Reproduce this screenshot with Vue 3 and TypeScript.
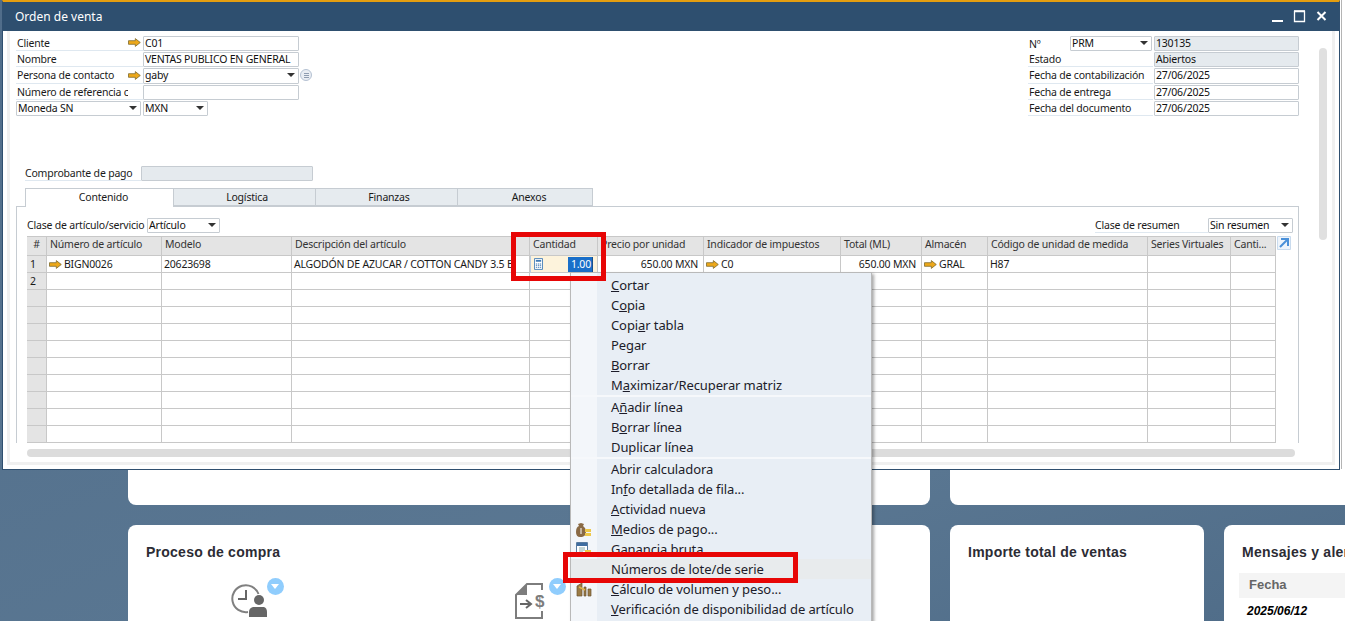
<script setup lang="ts">
interface Mi { t: string; u?: number; icon?: string; hl?: boolean; sep?: boolean }
const menu: Mi[] = [
  { t: 'Cortar', u: 0 }, { t: 'Copia', u: 1 }, { t: 'Copiar tabla', u: 4 }, { t: 'Pegar', u: 2 }, { t: 'Borrar', u: 0 },
  { t: 'Maximizar/Recuperar matriz', u: 1, sep: true },
  { t: 'Añadir línea', u: 1 }, { t: 'Borrar línea', u: 1 }, { t: 'Duplicar línea', sep: true },
  { t: 'Abrir calculadora' }, { t: 'Info detallada de fila...', u: 2 }, { t: 'Actividad nueva', u: 0 },
  { t: 'Medios de pago...', u: 0, icon: 'money' }, { t: 'Ganancia bruta', u: 0, icon: 'calc' },
  { t: 'Números de lote/de serie', hl: true }, { t: 'Cálculo de volumen y peso...', u: 0, icon: 'scale' },
  { t: 'Verificación de disponibilidad de artículo', u: 0 }
]
const head = ['#', 'Número de artículo', 'Modelo', 'Descripción del artículo', 'Cantidad', 'Precio por unidad', 'Indicador de impuestos', 'Total (ML)', 'Almacén', 'Código de unidad de medida', 'Series Virtuales', 'Canti...']
const blanks = Array.from({ length: 10 }, (_, i) => i)
const cols = Array.from({ length: 11 }, (_, i) => i)
</script>

<template>
  <div class="desk">
    <div class="cards">
      <div class="card wide"></div>
      <div class="card wide2"></div>
      <div class="card buy">
        <h3>Proceso de compra</h3>
        <div class="buyicons">
          <div class="bi">
            <svg width="36" height="36" viewBox="0 0 36 36"><path d="M27.500 10A13.500 13.500 0 1 0 17 28" fill="none" stroke="#808080" stroke-width="2"/><path d="M15 6v9H7" fill="none" stroke="#666" stroke-width="2"/><circle cx="28" cy="16" r="5" fill="#666"/><path d="M18 33v-5q0-4 4-5h11q3 1 3 5v5z" fill="#666"/></svg>
            <span class="drop"></span>
          </div>
          <div class="bi">
            <svg width="34" height="38" viewBox="0 0 34 38"><path d="M28 8V2H13L2 13v23h26v-7" fill="none" stroke="#7d7d7d" stroke-width="2"/><path d="M13 2v11H2z" fill="#7d7d7d"/><path d="M6 22h10M12 18l5 4-5 4" fill="none" stroke="#666" stroke-width="2"/><text x="21" y="25" class="dollar">$</text></svg>
            <span class="drop"></span>
          </div>
        </div>
      </div>
      <div class="card sales"><h3>Importe total de ventas</h3></div>
      <div class="card msg">
        <h3>Mensajes y alertas</h3>
        <div class="mh">Fecha</div>
        <div class="md">2025/06/12</div>
      </div>
    </div>

    <div class="edge"></div>
    <section class="win">
      <header class="title">
        <span>Orden de venta</span>
        <div class="ctrls">
          <svg width="14" height="14" viewBox="0 0 14 14"><path d="M1 12h11" stroke="#fff" stroke-width="2"/></svg>
          <svg width="14" height="14" viewBox="0 0 14 14"><path d="M1.500 2.500h10v10h-10z" fill="none" stroke="#fff" stroke-width="1.300"/><path d="M1 2h11" stroke="#fff" stroke-width="1.600"/></svg>
          <svg width="14" height="14" viewBox="0 0 14 14"><path d="M2.500 3l8 8M10.500 3l-8 8" stroke="#fff" stroke-width="2"/></svg>
        </div>
      </header>
      <div class="body">
        <div class="top">
          <div class="fl">
            <div class="r"><label class="lb"><span>Cliente</span><svg class="arr" viewBox="0 0 13 9"><path d="M.5 2.700h6.800V.6L12.300 4.500 7.300 8.400V6.300H.5z" fill="#eda81a" stroke="#7d6a2c" stroke-width=".8"/></svg></label><div class="inp w156">C01</div></div>
            <div class="r"><label class="lb"><span>Nombre</span></label><div class="inp w156">VENTAS PUBLICO EN GENERAL</div></div>
            <div class="r r3"><label class="lb"><span>Persona de contacto</span><svg class="arr" viewBox="0 0 13 9"><path d="M.5 2.700h6.800V.6L12.300 4.500 7.300 8.400V6.300H.5z" fill="#eda81a" stroke="#7d6a2c" stroke-width=".8"/></svg></label><div class="inp w156 sel">gaby</div><span class="lst"></span></div>
            <div class="r"><label class="lb"><span class="clip">Número de referencia c</span></label><div class="inp w156"></div></div>
            <div class="r"><div class="inp sel w125">Moneda SN</div><div class="inp sel w65">MXN</div></div>
          </div>
          <div class="fr">
            <div class="r"><label class="lb2 no"><span>Nº</span><div class="inp sel w82">PRM</div></label><div class="inp w144 ro">130135</div></div>
            <div class="r"><label class="lb2"><span>Estado</span></label><div class="inp w144 ro">Abiertos</div></div>
            <div class="r r3"><label class="lb2"><span>Fecha de contabilización</span></label><div class="inp w144">27/06/2025</div></div>
            <div class="r"><label class="lb2"><span>Fecha de entrega</span></label><div class="inp w144">27/06/2025</div></div>
            <div class="r"><label class="lb2"><span>Fecha del documento</span></label><div class="inp w144">27/06/2025</div></div>
          </div>
        </div>
        <div class="pay"><label>Comprobante de pago</label><div class="inp ro w172"></div></div>
        <nav class="tabs">
          <span class="tab on t1">Contenido</span><span class="tab t2">Logística</span><span class="tab t2">Finanzas</span><span class="tab t3">Anexos</span>
        </nav>
        <div class="panel">
          <div class="tools">
            <div class="tl"><label>Clase de artículo/servicio</label><div class="inp sel w73">Artículo</div></div>
            <div class="tr"><label>Clase de resumen</label><div class="inp sel w85">Sin resumen</div></div>
          </div>
          <div class="tablewrap">
            <div class="grid">
              <div v-for="(h, i) in head" :key="h" class="c th" :class="{ num: i === 0 }">{{ h }}</div>
              <div class="c rn">1</div>
              <div class="c"><svg class="arr a2" viewBox="0 0 13 9"><path d="M.5 2.700h6.800V.6L12.300 4.500 7.300 8.400V6.300H.5z" fill="#eda81a" stroke="#7d6a2c" stroke-width=".8"/></svg>BIGN0026</div>
              <div class="c">20623698</div>
              <div class="c dsc">ALGODÓN DE AZUCAR / COTTON CANDY 3.5 B</div>
              <div class="c qty">
                <svg width="9" height="12" viewBox="0 0 10 13"><path d="M.5.500h9v12h-9z" fill="#fff" stroke="#3f7ab5"/><path d="M2 2h6v2H2z" fill="#3f7ab5"/><path d="M2 6h1.500v1H2zM4.300 6h1.500v1H4.300zM6.500 6H8v1H6.500zM2 8h1.500v1H2zM4.300 8h1.500v1H4.300zM6.500 8H8v1H6.500zM2 10h1.500v1H2zM4.300 10h1.500v1H4.300zM6.500 10H8v1H6.500z" fill="#3f7ab5"/></svg>
                <b>1.00</b>
              </div>
              <div class="c rt">650.00 MXN</div>
              <div class="c"><svg class="arr a2" viewBox="0 0 13 9"><path d="M.5 2.700h6.800V.6L12.300 4.500 7.300 8.400V6.300H.5z" fill="#eda81a" stroke="#7d6a2c" stroke-width=".8"/></svg>C0</div>
              <div class="c rt">650.00 MXN</div>
              <div class="c"><svg class="arr a2" viewBox="0 0 13 9"><path d="M.5 2.700h6.800V.6L12.300 4.500 7.300 8.400V6.300H.5z" fill="#eda81a" stroke="#7d6a2c" stroke-width=".8"/></svg>GRAL</div>
              <div class="c">H87</div>
              <div class="c"></div>
              <div class="c"></div>
              <template v-for="n in blanks" :key="n">
                <div class="c rn">{{ n === 0 ? '2' : '' }}</div>
                <div v-for="k in cols" :key="k" class="c"></div>
              </template>
            </div>
            <svg class="expand" width="14" height="14" viewBox="0 0 14 14"><path d="M.5.500h13v13H.5z" fill="#eef4fb" stroke="#c9dbee"/><path d="M4 3h7v7M11 3L3 11" fill="none" stroke="#4a90d9" stroke-width="2"/></svg>
          </div>
        </div>
        <div class="hscroll"></div>
      </div>
      <div class="vscroll"></div>
    </section>

    <div class="ctx">
      <div v-for="m in menu" :key="m.t" class="mi" :class="{ hl: m.hl, sep: m.sep }">
        <span class="ic">
          <svg v-if="m.icon === 'money'" width="16" height="15" viewBox="0 0 16 15"><path d="M5 1l3 1-1 2q3 2 3 6t-4 5H4q-4 0-4-5t3-6L2 2z" fill="#8a6a45"/><path d="M9 7h6v3H9zM9 11h6v3H9z" fill="#eec84a"/><path d="M5 6v6" stroke="#fff"/></svg>
          <svg v-if="m.icon === 'calc'" width="16" height="15" viewBox="0 0 16 15"><path d="M.5.500h11v13H.5z" fill="#fff" stroke="#5a7ca0"/><path d="M1 1h10v3H1z" fill="#3f6da0"/><path d="M3 6h6M3 8h6M3 10h4" stroke="#8aa"/><path d="M9 8h6v5H9z" fill="#eec84a"/></svg>
          <svg v-if="m.icon === 'scale'" width="16" height="15" viewBox="0 0 16 15"><path d="M1 14V4l5-3v13zM8 14V5h2v9zM12 14V7h3v7z" fill="#9b7b45" stroke="#6a5530" stroke-width=".7"/><path d="M3 5l6 3" stroke="#e0b84a" stroke-width="1.500"/></svg>
        </span>
        <span class="tx"><template v-if="m.u !== undefined">{{ m.t.slice(0, m.u) }}<u>{{ m.t[m.u] }}</u>{{ m.t.slice(m.u + 1) }}</template><template v-else>{{ m.t }}</template></span>
      </div>
    </div>

    <div class="red r1"></div>
    <div class="red r2"></div>
  </div>
</template>

<style>
html, body { margin: 0; height: 100%; overflow: hidden; }
</style>

<style scoped>
.desk { position: relative; width: 1345px; height: 621px; overflow: hidden; background: linear-gradient(160deg, #506d8a 0%, #5a7792 70%, #4f6c88 100%); font-family: "Noto Sans", "Open Sans", sans-serif; font-size: 10.5px; letter-spacing: -.2px; color: #1a1a1a; }
.cards { display: grid; grid-template-columns: 802px 254px 200px; column-gap: 20px; grid-template-rows: 505px 200px; row-gap: 20px; padding-left: 128px; }
.card { background: #fff; border-radius: 8px; letter-spacing: 0; }
.wide { grid-column: 1; }
.wide2 { grid-column: 2 / 4; border-radius: 8px 0 0 8px; margin-right: -80px; }
.buy { position: relative; }
.card h3 { margin: 0; font: bold 14px "Liberation Sans", Arial, sans-serif; color: #2c2c34; letter-spacing: .25px; padding: 19px 0 0 18px; line-height: 17px; }
.buyicons { position: relative; }
.bi { position: absolute; top: 23px; }
.bi:nth-child(1) { left: 103px; }
.bi:nth-child(2) { left: 386px; top: 21px; }
.dollar { font: bold 17px "Liberation Sans", sans-serif; fill: #7d7d7d; }
.drop { position: absolute; top: -6px; right: -17px; width: 17px; height: 17px; border-radius: 50%; background: #90cdfd; }
.bi:nth-child(2) .drop { top: -4px; right: -18px; }
.drop::after { content: ""; position: absolute; left: 4px; top: 6px; border: 4.500px solid transparent; border-top: 5px solid #fff; }
.msg { border-radius: 8px 0 0 8px; margin-right: -60px; }
.msg h3 { white-space: nowrap; }
.mh { margin: 12px 0 0 15px; height: 25px; padding-left: 10px; background: #f4f4f4; font: bold 13px/23px "Liberation Sans", sans-serif; color: #666; }
.md { margin: 6px 0 0 23px; font: italic bold 12px "Liberation Sans", sans-serif; color: #000; }

.edge { position: absolute; left: 1341px; top: 0; width: 1px; height: 469px; background: #b4b4b4; }
.win { position: absolute; left: 2px; top: 0; width: 1338px; height: 470px; box-sizing: border-box; background: #fff; border: solid #2f4f6f; border-width: 0 1px 1px; border-top: 2px solid #e59e0f; }
.title { height: 29px; background: #2e4f6f; color: #fff; font-size: 12px; letter-spacing: 0; display: flex; align-items: center; justify-content: space-between; padding: 0 10px 0 12px; }
.ctrls { display: flex; gap: 8px; margin-top: -1px; }
.body { position: relative; margin: 0 4px 0 4px; padding: 5px 0 0 9px; height: 434px; box-sizing: border-box; border: solid #f0f0f0; border-width: 0 3px 3px; }
.vscroll { position: absolute; right: 12px; top: 46px; width: 8px; height: 192px; background: #e0e0e0; border-radius: 4px; }
.top { display: flex; justify-content: space-between; padding-right: 33px; }
.fl, .fr { display: grid; grid-template-rows: 16px 16px 17px 16px 16px; }
.fl { margin-left: -3px; }
.r { display: flex; align-items: flex-start; }
.lb, .lb2 { display: flex; align-items: center; justify-content: space-between; height: 15px; box-sizing: border-box; padding: 0 2px 1px 1px; border-bottom: 1px solid #dfe8f0; white-space: nowrap; overflow: hidden; }
.lb { width: 127px; }
.lb2 { width: 125px; }
.clip { width: 111px; overflow: hidden; }
.no { border: 0; justify-content: flex-start; padding: 0 0 0 1px; overflow: visible; }
.no span { width: 41px; }
.arr { width: 13px; height: 9px; flex: none; }
.a2 { margin: 0 2px 0 0; }
.inp { position: relative; box-sizing: border-box; height: 15px; line-height: 12px; border: 1px solid #c6ccd2; border-radius: 1px; background: #fff; padding-left: 1px; white-space: nowrap; overflow: hidden; color: #111; }
.r3 .inp, .r3 .lb, .r3 .lb2 { height: 16px; }
.r3 .inp { line-height: 13px; }
.w156 { width: 156px; }
.w125 { width: 125px; margin-right: 2px; }
.w65 { width: 65px; }
.w82 { width: 82px; }
.w144 { width: 145px; margin-left: 1px; }
.w172 { width: 172px; }
.w73 { width: 73px; }
.w85 { width: 85px; }
.ro { background: #e5eaee; }
.sel::after { content: ""; position: absolute; right: 3px; top: 4px; border: 4px solid transparent; border-top: 4.500px solid #333; border-bottom: 0; }
.lst { width: 12px; height: 12px; margin: 1px 0 0 1px; border-radius: 50%; box-sizing: border-box; border: 1px solid #b5c2d3; background: repeating-linear-gradient(#8e9cb0 0 1px, #e9edf3 1px 2px) center / 5px 5px no-repeat #e9edf3; }
.pay { display: flex; height: 15px; margin: 49px 0 0 6px; }
.pay label { width: 116px; white-space: nowrap; border-bottom: 1px solid #dfe8f0; box-sizing: border-box; line-height: 15px; }
.tabs { display: flex; margin: 7px 0 0 6px; height: 19px; position: relative; z-index: 1; }
.tab { box-sizing: border-box; height: 18px; line-height: 17px; padding-left: 5px; text-align: center; background: #e6ebef; border: 1px solid #c6ccd2; border-left: 0; }
.t1 { width: 149px; padding-left: 8px; background: #fff; border-left: 1px solid #c6ccd2; border-bottom: 0; height: 19px; }
.t2 { width: 142px; }
.t3 { width: 135px; padding-left: 8px; }
.panel { margin: -1px 0 0 -3px; height: 237px; border: solid #c6ccd2; border-width: 1px 1px 0; padding: 11px 0 0 10px; box-sizing: border-box; width: 1283px; }
.tools { display: flex; justify-content: space-between; height: 18px; padding-right: 5px; }
.tl, .tr { display: flex; }
.tl label { width: 120px; line-height: 15px; white-space: nowrap; }
.tr label { width: 113px; line-height: 14px; border-bottom: 1px solid #dfe8f0; height: 15px; box-sizing: border-box; }
.tablewrap { position: relative; }
.grid { display: grid; width: 1249px; grid-template-columns: 20px 115px 130px 238px 68px 106px 137px 81px 66px 160px 83px 45px; grid-template-rows: 19px 17px; grid-auto-rows: 17px; border-top: 1px solid #c8c8c8; overflow: hidden; height: 207px; box-sizing: border-box; align-content: start; }
.c { box-sizing: border-box; border-right: 1px solid #c8c8c8; border-bottom: 1px solid #c8c8c8; padding: 0 0 0 2px; line-height: 15px; white-space: nowrap; overflow: hidden; display: flex; align-items: center; }
.th { background: #e4e4e4; padding: 0 0 3px 3px; color: #333; }
.num { justify-content: center; padding: 0 0 3px; }
.rn { background: #e4e4e4; padding-left: 3px; }
.dsc { overflow: visible; }
.rt { justify-content: flex-end; padding-right: 5px; }
.qty { background: #fdf3dc; padding: 0 4px 0 3px; justify-content: space-between; border-left: 1px solid #b8cde3; position: relative; }
.qty b { font-weight: 400; background: #1a6fc9; color: #fff; padding: 0 1px 0 3px; line-height: 15px; border-right: 1px solid #1a4f8a; }
.expand { position: absolute; left: 1250px; top: 0; }
.hscroll { margin: 6px 0 0 8px; width: 1268px; height: 8px; border-radius: 4px; background: #dcdcdc; }

.ctx { position: absolute; left: 570px; top: 272px; width: 302px; height: 360px; box-sizing: border-box; padding-top: 2px; background: linear-gradient(90deg, #f3f6fa 0 26px, #e8eef5 26px); border: 1px solid #b9b9b9; box-shadow: 2px 2px 3px rgba(0, 0, 0, .35); font-size: 13px; letter-spacing: -.1px; color: #1c1c2a; }
.mi { display: flex; height: 20px; align-items: center; line-height: 20px; }
.mi.sep { height: 22px; box-sizing: border-box; border-bottom: 2px solid #f6f8fb; }
.mi.hl { background: #e8ebed; }
.ic { width: 40px; padding-left: 5px; box-sizing: border-box; display: flex; }
.tx { white-space: nowrap; }
.red { position: absolute; box-sizing: border-box; border: 5px solid #e70606; }
.r1 { left: 511px; top: 232px; width: 95px; height: 49px; }
.r2 { left: 563px; top: 552px; width: 235px; height: 31px; }
</style>
